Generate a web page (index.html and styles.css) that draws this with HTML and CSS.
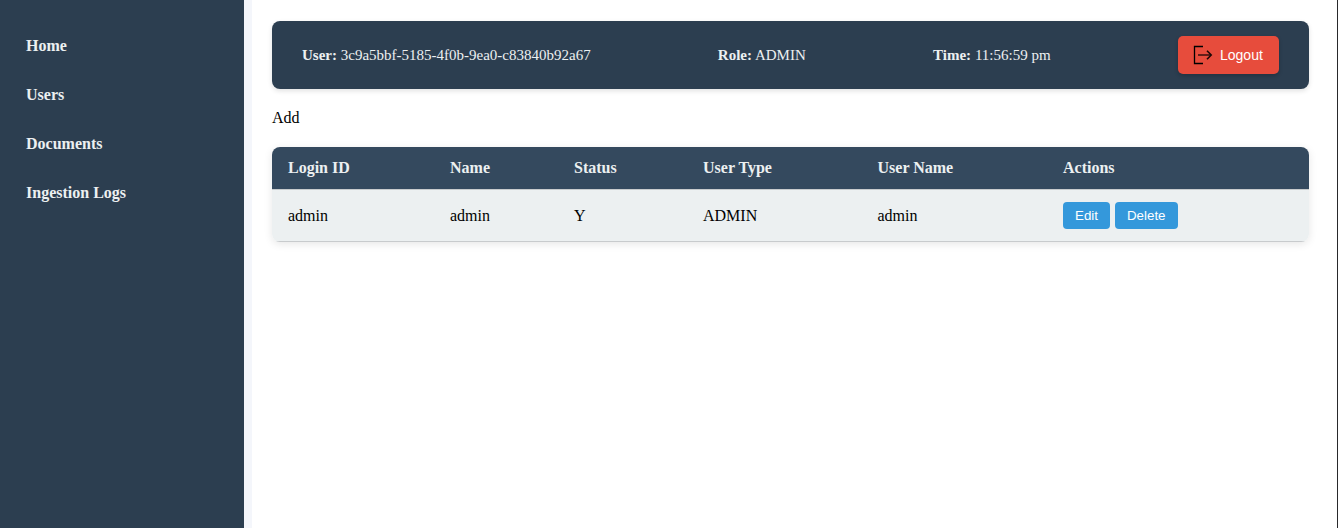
FILE: index.html
```html
<!DOCTYPE html>
<html lang="en">
<head>
<meta charset="utf-8">
<title>Users</title>
<link rel="stylesheet" href="styles.css">
</head>
<body>
<div class="app">
  <nav class="sidebar">
    <a class="nav-link">Home</a>
    <a class="nav-link">Users</a>
    <a class="nav-link">Documents</a>
    <a class="nav-link">Ingestion Logs</a>
  </nav>
  <main class="content">
    <header class="topbar">
      <span><strong>User:</strong> 3c9a5bbf-5185-4f0b-9ea0-c83840b92a67</span>
      <span><strong>Role:</strong> ADMIN</span>
      <span class="time"><strong>Time:</strong> 11:56:59 pm</span>
      <button class="logout">
        <svg class="logout-icon" width="20" height="20" viewBox="0 0 20 20" fill="none">
          <path d="M10 1.5H1.5V18.5H10" stroke="#000" stroke-width="1.3"/>
          <path d="M5 10H18" stroke="#4a1712" stroke-width="1.7"/>
          <path d="M14 5.8L18.2 10L14 14.2" stroke="#1c0806" stroke-width="1.6"/>
        </svg>
        <span>Logout</span>
      </button>
    </header>
    <div class="add">Add</div>
    <table class="users">
      <colgroup><col class="c-login"><col class="c-name"><col class="c-status"><col class="c-type"><col class="c-user"><col></colgroup>
      <thead>
        <tr><th>Login ID</th><th>Name</th><th>Status</th><th>User Type</th><th>User Name</th><th>Actions</th></tr>
      </thead>
      <tbody>
        <tr><td>admin</td><td>admin</td><td>Y</td><td>ADMIN</td><td>admin</td><td><div class="actions"><button class="btn">Edit</button><button class="btn">Delete</button></div></td></tr>
      </tbody>
    </table>
  </main>
</div>
</body>
</html>
```
FILE: styles.css
```css
* { box-sizing: border-box; }
body { margin: 0; background: #fff; font: 16px/18px "Liberation Serif", "Times New Roman", serif; color: #000; }
.app { display: flex; height: 528px; overflow: hidden; border-right: 1px solid #29292b; }
.sidebar { width: 252px; flex: none; padding: 37px 26px; background: #2c3e50; border-right: 8px solid #f4f6fb; display: flex; flex-direction: column; gap: 31px; }
.nav-link { color: #ecf0f1; font-weight: bold; }
.content { flex: 1; min-width: 0; padding: 21px 28px 0 20px; }
.topbar { height: 68px; padding: 0 30px; display: flex; align-items: center; justify-content: space-between; background: #2c3e50; color: #ecf0f1; border-radius: 8px; box-shadow: 0 2px 5px rgba(0,0,0,.12); font-size: 15px; }
.time { letter-spacing: 0.02px; }
.logout { display: flex; align-items: center; gap: 7px; width: 101px; height: 38px; padding: 0 15px; border: 0; border-radius: 5px; background: #e74c3c; color: #fff; font: 14px "Liberation Sans", Arial, sans-serif; box-shadow: 0 2px 4px rgba(0,0,0,.2); }
.logout-icon { flex: none; }
.add { margin: 20px 0; }
.users { width: 100%; table-layout: fixed; border-collapse: separate; border-spacing: 0; border-radius: 8px; overflow: hidden; box-shadow: 0 2px 8px rgba(0,0,0,.1); }
.c-login { width: 162px; }
.c-name { width: 124px; }
.c-status { width: 129px; }
.c-type { width: 174.5px; }
.c-user { width: 185.5px; }
th, td { text-align: left; padding: 0 16px; border-bottom: 1px solid #c8cbcd; }
th { height: 43px; background: #34495e; color: #ecf0f1; }
td { height: 52px; background: #ecf0f1; }
.actions { display: flex; gap: 5px; }
.btn { height: 27px; padding: 0 12px; border: 0; border-radius: 4px; background: #3498db; color: #fff; font: 13.333px "Liberation Sans", Arial, sans-serif; }
```
